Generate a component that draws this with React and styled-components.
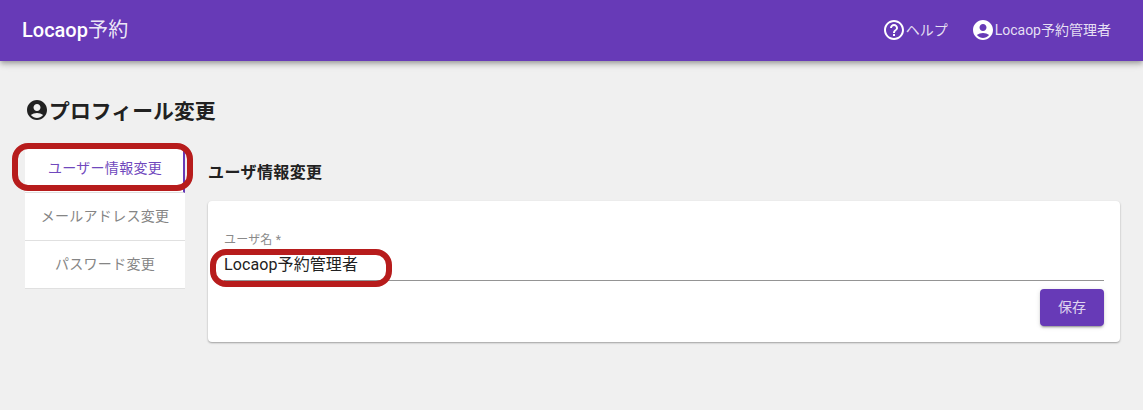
import React from 'react';
import styled, { createGlobalStyle } from 'styled-components';

const GlobalStyle = createGlobalStyle`
  html, body {
    margin: 0;
    padding: 0;
    height: 100%;
    background: #f0f0f0;
    font-family: Roboto, "Noto Sans CJK JP", sans-serif;
  }
`;

const Page = styled.div`
  width: 1143px;
  height: 410px;
  overflow: hidden;
  background: #f0f0f0;
`;

const Header = styled.header`
  height: 61px;
  box-sizing: border-box;
  padding: 0 32px 2px 22px;
  display: flex;
  align-items: center;
  justify-content: space-between;
  background: #673ab7;
  color: #fff;
  box-shadow: 0 2px 4px -1px rgba(0,0,0,.2), 0 4px 5px 0 rgba(0,0,0,.14), 0 1px 10px 0 rgba(0,0,0,.12);
`;

const Brand = styled.div`
  font-size: 20px;
  font-weight: 500;
  line-height: 24px;
`;

const BrandKana = styled.span`
  font-weight: 400;
  letter-spacing: .3px;
  color: rgba(255,255,255,.9);
`;

const HeaderNav = styled.nav`
  display: flex;
  align-items: center;
  gap: 23px;
`;

const NavItem = styled.div`
  display: flex;
  align-items: center;
  font-size: 14px;
  color: rgba(255,255,255,.85);
  svg { color: #fff; }
`;

const NavLabel = styled.span`
  padding-bottom: 2px;
`;

const Main = styled.main`
  padding: 36px 23px 0 25px;
`;

const Title = styled.h1`
  margin: 0 0 22px;
  height: 26px;
  display: flex;
  align-items: center;
  font-size: 20.8px;
  font-weight: 700;
  color: #212121;
  letter-spacing: .1px;
`;

const Columns = styled.div`
  display: flex;
  gap: 23px;
`;

const Tabs = styled.div`
  width: 160px;
  flex-shrink: 0;
`;

const Tab = styled.div`
  height: 48px;
  box-sizing: border-box;
  padding-bottom: 4px;
  display: flex;
  align-items: center;
  justify-content: center;
  background: #fff;
  font-size: 14px;
  letter-spacing: .3px;
  color: ${props => (props.$active ? '#7048bd' : '#858585')};
  border-bottom: 1px solid #e0e0e0;
  ${props => props.$active && 'border-right: 2px solid #673ab7; padding-left: 2px;'}
`;

const Content = styled.section`
  flex: 1;
`;

const SectionTitle = styled.h2`
  margin: 0;
  height: 56px;
  padding-top: 18px;
  box-sizing: border-box;
  font-size: 16px;
  line-height: 20px;
  font-weight: 700;
  letter-spacing: .4px;
  color: #212121;
`;

const Card = styled.div`
  height: 141px;
  box-sizing: border-box;
  padding: 31px 16px 0;
  background: #fff;
  border-radius: 4px;
  box-shadow: 0 1px 2px rgba(0,0,0,.35);
`;

const Label = styled.label`
  display: block;
  font-size: 12px;
  line-height: 16px;
  letter-spacing: .2px;
  color: #8a8a8a;
`;

const FieldValue = styled.div`
  height: 34px;
  box-sizing: border-box;
  padding-top: 5px;
  font-size: 16px;
  line-height: 26px;
  letter-spacing: .1px;
  color: #212121;
  border-bottom: 1px solid #949494;
  margin-bottom: 8px;
  margin-top: -1px;
`;

const ButtonRow = styled.div`
  display: flex;
  justify-content: flex-end;
`;

const SaveButton = styled.button`
  width: 64px;
  height: 37px;
  border: 0;
  border-radius: 4px;
  padding: 0 0 3px;
  background: #673ab7;
  color: rgba(255,255,255,.8);
  font-family: inherit;
  font-size: 14px;
  box-shadow: 0 3px 1px -2px rgba(0,0,0,.2), 0 2px 2px 0 rgba(0,0,0,.14), 0 1px 5px 0 rgba(0,0,0,.12);
`;

// red marks drawn over the screenshot
const Highlight = styled.div`
  position: absolute;
  box-sizing: border-box;
  border: 6px solid #b71c1c;
  border-radius: 16px;
  pointer-events: none;
  left: ${props => props.$left}px;
  top: ${props => props.$top}px;
  width: ${props => props.$width}px;
  height: ${props => props.$height}px;
`;

const AccountIcon = ({ size = 24 }) => (
  <svg width={size} height={size} viewBox="0 0 24 24" fill="currentColor">
    <path d="M12 2C6.48 2 2 6.48 2 12s4.48 10 10 10 10-4.48 10-10S17.52 2 12 2zm0 4c1.93 0 3.5 1.57 3.5 3.5S13.93 13 12 13s-3.5-1.57-3.5-3.5S10.07 6 12 6zm0 14c-2.03 0-4.43-.82-6.14-2.88C7.55 15.8 9.68 15 12 15s4.45.8 6.14 2.12C16.43 19.18 14.03 20 12 20z" />
  </svg>
);

const HelpIcon = () => (
  <svg width="24" height="24" viewBox="0 0 24 24" fill="currentColor">
    <path d="M11 18h2v-2h-2v2zm1-16C6.48 2 2 6.48 2 12s4.48 10 10 10 10-4.48 10-10S17.52 2 12 2zm0 18c-4.41 0-8-3.59-8-8s3.59-8 8-8 8 3.59 8 8-3.59 8-8 8zm0-14c-2.21 0-4 1.79-4 4h2c0-1.1.9-2 2-2s2 .9 2 2c0 2-3 1.75-3 5h2c0-2.25 3-2.5 3-5 0-2.21-1.79-4-4-4z" />
  </svg>
);

export default function App() {
  return (
    <Page>
      <GlobalStyle />
      <Header>
        <Brand>Locaop<BrandKana>予約</BrandKana></Brand>
        <HeaderNav>
          <NavItem><HelpIcon /><NavLabel>ヘルプ</NavLabel></NavItem>
          <NavItem><AccountIcon /><NavLabel>Locaop予約管理者</NavLabel></NavItem>
        </HeaderNav>
      </Header>
      <Main>
        <Title><AccountIcon />プロフィール変更</Title>
        <Columns>
          <Tabs>
            <Tab $active>ユーザー情報変更</Tab>
            <Tab>メールアドレス変更</Tab>
            <Tab>パスワード変更</Tab>
          </Tabs>
          <Content>
            <SectionTitle>ユーザ情報変更</SectionTitle>
            <Card>
              <Label>ユーザ名 *</Label>
              <FieldValue>Locaop予約管理者</FieldValue>
              <ButtonRow>
                <SaveButton>保存</SaveButton>
              </ButtonRow>
            </Card>
          </Content>
        </Columns>
      </Main>
      <Highlight $left={12} $top={143} $width={181} $height={48} />
      <Highlight $left={210} $top={249} $width={182} $height={38} />
    </Page>
  );
}
